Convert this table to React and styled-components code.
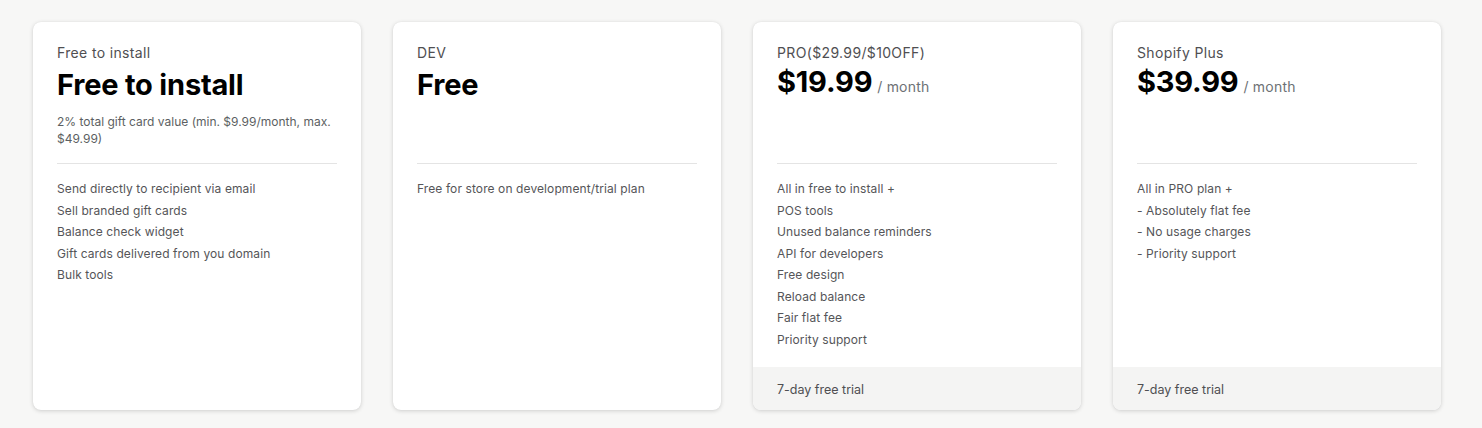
import React from "react";
import styled, { createGlobalStyle } from "styled-components";

const Global = createGlobalStyle`
  html, body { margin: 0; padding: 0; background: #f7f7f6; }
  body { font-family: Inter, "Noto Sans", sans-serif; -webkit-font-smoothing: antialiased; }
  * { box-sizing: border-box; }
`;

const Page = styled.div`
  padding: 22px 41px 18px 33px;
  display: grid;
  grid-template-columns: repeat(4, 328px);
  gap: 32px;
  align-items: stretch;
`;

const Card = styled.div`
  background: #ffffff;
  border-radius: 8px;
  box-shadow: 0 1px 4px rgba(0, 0, 0, 0.16), 0 0 1px rgba(0, 0, 0, 0.08);
  display: flex;
  flex-direction: column;
  overflow: hidden;
`;

const Body = styled.div`
  padding: 21px 24px 17px;
  flex: 1;
`;

const Header = styled.div`
  min-height: 120px;
`;

const Label = styled.div`
  font-size: 14px;
  line-height: 20px;
  letter-spacing: 0.35px;
  color: #4f4f52;
`;

const PriceRow = styled.div`
  margin-top: ${(p) => (p.$withPeriod ? "1px" : "4px")};
  display: flex;
  align-items: baseline;
  gap: 5px;
`;

const Price = styled.div`
  font-size: 29px;
  line-height: 36px;
  font-weight: 700;
  color: #000;
  letter-spacing: -0.2px;
`;

const Period = styled.span`
  font-size: 14px;
  letter-spacing: 0.2px;
  color: #6d7175;
`;

const Desc = styled.div`
  margin-top: 10px;
  font-size: 12px;
  line-height: 17px;
  color: #5c5f62;
`;

const Divider = styled.hr`
  margin: 0;
  border: none;
  border-top: 1px solid #e4e4e4;
`;

const Features = styled.ul`
  list-style: none;
  margin: 0;
  padding: 14px 0 0;
`;

const Feature = styled.li`
  font-size: 12px;
  line-height: 21.5px;
  letter-spacing: 0.1px;
  color: #555558;
`;

const Footer = styled.div`
  height: 43px;
  display: flex;
  align-items: center;
  padding: 1px 24px 0;
  background: #f4f4f3;
  font-size: 12.5px;
  color: #4f4f52;
`;

const plans = [
  {
    label: "Free to install",
    price: "Free to install",
    desc: "2% total gift card value (min. $9.99/month, max. $49.99)",
    features: [
      "Send directly to recipient via email",
      "Sell branded gift cards",
      "Balance check widget",
      "Gift cards delivered from you domain",
      "Bulk tools",
    ],
  },
  {
    label: "DEV",
    price: "Free",
    features: ["Free for store on development/trial plan"],
  },
  {
    label: "PRO($29.99/$10OFF)",
    price: "$19.99",
    period: "/ month",
    features: [
      "All in free to install +",
      "POS tools",
      "Unused balance reminders",
      "API for developers",
      "Free design",
      "Reload balance",
      "Fair flat fee",
      "Priority support",
    ],
    footer: "7-day free trial",
  },
  {
    label: "Shopify Plus",
    price: "$39.99",
    period: "/ month",
    features: [
      "All in PRO plan +",
      "- Absolutely flat fee",
      "- No usage charges",
      "- Priority support",
    ],
    footer: "7-day free trial",
  },
];

export default function App() {
  return (
    <>
      <Global />
      <Page>
        {plans.map((p) => (
          <Card key={p.label}>
            <Body>
              <Header>
                <Label>{p.label}</Label>
                <PriceRow $withPeriod={!!p.period}>
                  <Price>{p.price}</Price>
                  {p.period && <Period>{p.period}</Period>}
                </PriceRow>
                {p.desc && <Desc>{p.desc}</Desc>}
              </Header>
              <Divider />
              <Features>
                {p.features.map((f) => (
                  <Feature key={f}>{f}</Feature>
                ))}
              </Features>
            </Body>
            {p.footer && <Footer>{p.footer}</Footer>}
          </Card>
        ))}
      </Page>
    </>
  );
}
